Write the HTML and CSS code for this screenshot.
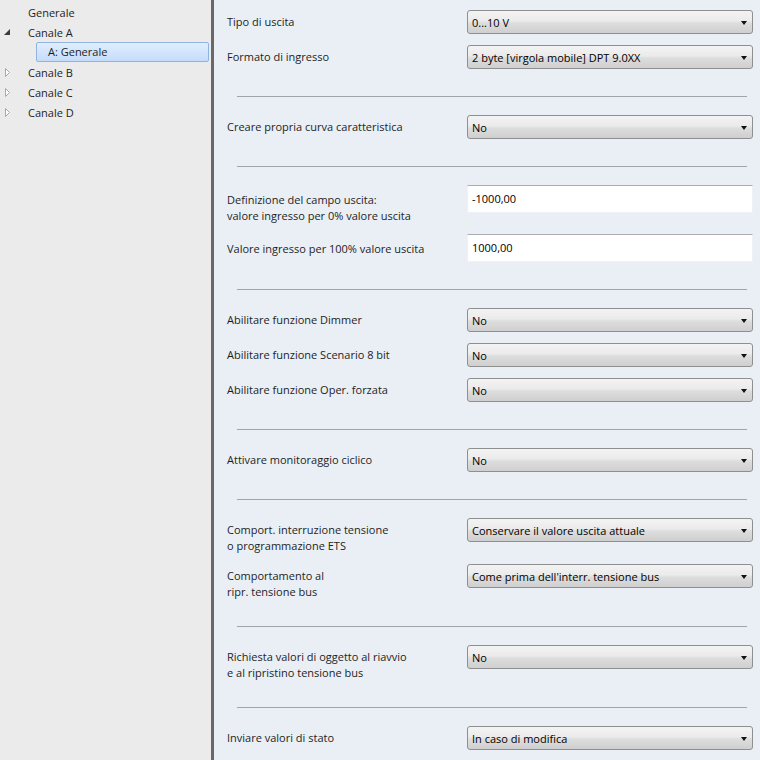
FILE: index.html
```html
<!DOCTYPE html>
<html lang="it">
<head>
    <meta charset="UTF-8">
    <meta name="viewport" content="width=device-width, initial-scale=1.0">
    <title>Canale A: Generale</title>
    <link rel="stylesheet" href="styles.css">
</head>
<body>
    <div class="app">
      <div class="sidebar">
        <ul class="tree">
          <li class="node"><span class="twisty"></span><span>Generale</span></li>
          <li class="node">
            <span class="twisty">
              <svg width="8" height="8" viewBox="0 0 8 8"><polygon points="7,1 7,7 1,7" fill="#3c3c3c"/></svg>
            </span>
            <span>Canale A</span>
          </li>
          <li class="node child"><span class="selected">A: Generale</span></li>
          <li class="node">
            <span class="twisty">
              <svg width="8" height="9" viewBox="0 0 8 9"><polygon points="2.5,0.5 6.5,4.5 2.5,8.5" fill="#fff" stroke="#a8a8a8"/></svg>
            </span>
            <span>Canale B</span>
          </li>
          <li class="node">
            <span class="twisty">
              <svg width="8" height="9" viewBox="0 0 8 9"><polygon points="2.5,0.5 6.5,4.5 2.5,8.5" fill="#fff" stroke="#a8a8a8"/></svg>
            </span>
            <span>Canale C</span>
          </li>
          <li class="node">
            <span class="twisty">
              <svg width="8" height="9" viewBox="0 0 8 9"><polygon points="2.5,0.5 6.5,4.5 2.5,8.5" fill="#fff" stroke="#a8a8a8"/></svg>
            </span>
            <span>Canale D</span>
          </li>
        </ul>
      </div>

      <div class="splitter"></div>

      <div class="params">
        <div class="section first">
          <div class="row">
            <div class="label">Tipo di uscita</div>
            <div class="combo"><span>0...10 V</span><i class="arrow"></i></div>
          </div>
          <div class="row">
            <div class="label">Formato di ingresso</div>
            <div class="combo"><span>2 byte [virgola mobile] DPT 9.0XX</span><i class="arrow"></i></div>
          </div>
        </div>
        <hr class="sep">

        <div class="section">
          <div class="row">
            <div class="label">Creare propria curva caratteristica</div>
            <div class="combo"><span>No</span><i class="arrow"></i></div>
          </div>
        </div>
        <hr class="sep">

        <div class="section fields">
          <div class="row">
            <div class="label">Definizione del campo uscita:<br>valore ingresso per 0% valore uscita</div>
            <div class="field">-1000,00</div>
          </div>
          <div class="row">
            <div class="label">Valore ingresso per 100% valore uscita</div>
            <div class="field">1000,00</div>
          </div>
        </div>
        <hr class="sep">

        <div class="section">
          <div class="row">
            <div class="label">Abilitare funzione Dimmer</div>
            <div class="combo"><span>No</span><i class="arrow"></i></div>
          </div>
          <div class="row">
            <div class="label">Abilitare funzione Scenario 8 bit</div>
            <div class="combo"><span>No</span><i class="arrow"></i></div>
          </div>
          <div class="row">
            <div class="label">Abilitare funzione Oper. forzata</div>
            <div class="combo"><span>No</span><i class="arrow"></i></div>
          </div>
        </div>
        <hr class="sep">

        <div class="section">
          <div class="row">
            <div class="label">Attivare monitoraggio ciclico</div>
            <div class="combo"><span>No</span><i class="arrow"></i></div>
          </div>
        </div>
        <hr class="sep">

        <div class="section">
          <div class="row">
            <div class="label">Comport. interruzione tensione<br>o programmazione ETS</div>
            <div class="combo"><span>Conservare il valore uscita attuale</span><i class="arrow"></i></div>
          </div>
          <div class="row">
            <div class="label">Comportamento al<br>ripr. tensione bus</div>
            <div class="combo"><span>Come prima dell'interr. tensione bus</span><i class="arrow"></i></div>
          </div>
        </div>
        <hr class="sep">

        <div class="section">
          <div class="row">
            <div class="label">Richiesta valori di oggetto al riavvio<br>e al ripristino tensione bus</div>
            <div class="combo"><span>No</span><i class="arrow"></i></div>
          </div>
        </div>
        <hr class="sep">

        <div class="section">
          <div class="row">
            <div class="label">Inviare valori di stato</div>
            <div class="combo"><span>In caso di modifica</span><i class="arrow"></i></div>
          </div>
        </div>
      </div>
    </div>
</body>
</html>
```

FILE: styles.css
```css
body {
  margin: 0;
  padding: 0;
  font-family: "Open Sans", "Noto Sans", sans-serif;
  font-size: 11px;
  color: #1e1e1e;
  overflow: hidden;
}

.app {
  display: flex;
  height: 100vh;
}

/* left tree */
.sidebar {
  width: 211px;
  flex: none;
  background: #ebebeb;
}

.tree {
  list-style: none;
  margin: 0;
  padding: 2px 0 0 0;
}

.node {
  display: flex;
  align-items: center;
  height: 20px;
  padding-left: 3px;
}

.twisty {
  display: flex;
  align-items: center;
  width: 25px;
  height: 20px;
}

.child {
  padding-left: 36px;
  padding-right: 2px;
}

.selected {
  flex: 1;
  height: 18px;
  line-height: 18px;
  padding-left: 11px;
  border: 1px solid #8fb4e0;
  border-radius: 2px;
  background: linear-gradient(#e1eefd, #c4dcfb);
}

.splitter {
  width: 3px;
  flex: none;
  background: #696969;
}

/* parameter page */
.params {
  flex: 1;
  padding: 10px 0 0 13px;
  background: #e9eff5;
}

.section {
  display: flex;
  flex-direction: column;
  gap: 11px;
  padding: 18px 0 27px;
}

.section.first {
  padding-top: 0;
}

.row {
  display: flex;
  align-items: flex-start;
}

.label {
  width: 240px;
  flex: none;
  padding-top: 4px;
  margin-bottom: -1px;
  line-height: 16px;
}

.fields .label {
  padding-top: 7px;
}

.combo {
  display: flex;
  align-items: center;
  justify-content: space-between;
  box-sizing: border-box;
  width: 286px;
  height: 24px;
  padding: 1px 5px 0 4px;
  border: 1px solid #8e8f8f;
  border-radius: 3px;
  background: linear-gradient(#f3f3f3, #ebebeb 45%, #dddddd 55%, #cfcfcf);
  color: #000;
}

.arrow {
  width: 0;
  height: 0;
  border-left: 3.5px solid transparent;
  border-right: 3.5px solid transparent;
  border-top: 4px solid #111;
}

.field {
  box-sizing: border-box;
  width: 286px;
  height: 28px;
  line-height: 26px;
  padding-left: 4px;
  background: #fff;
  border: 1px solid #eef1f5;
  border-top-color: #abadb3;
  color: #000;
}

.sep {
  margin: 0 13px 0 10px;
  height: 1px;
  border: none;
  background: #a2a5a8;
}
```
